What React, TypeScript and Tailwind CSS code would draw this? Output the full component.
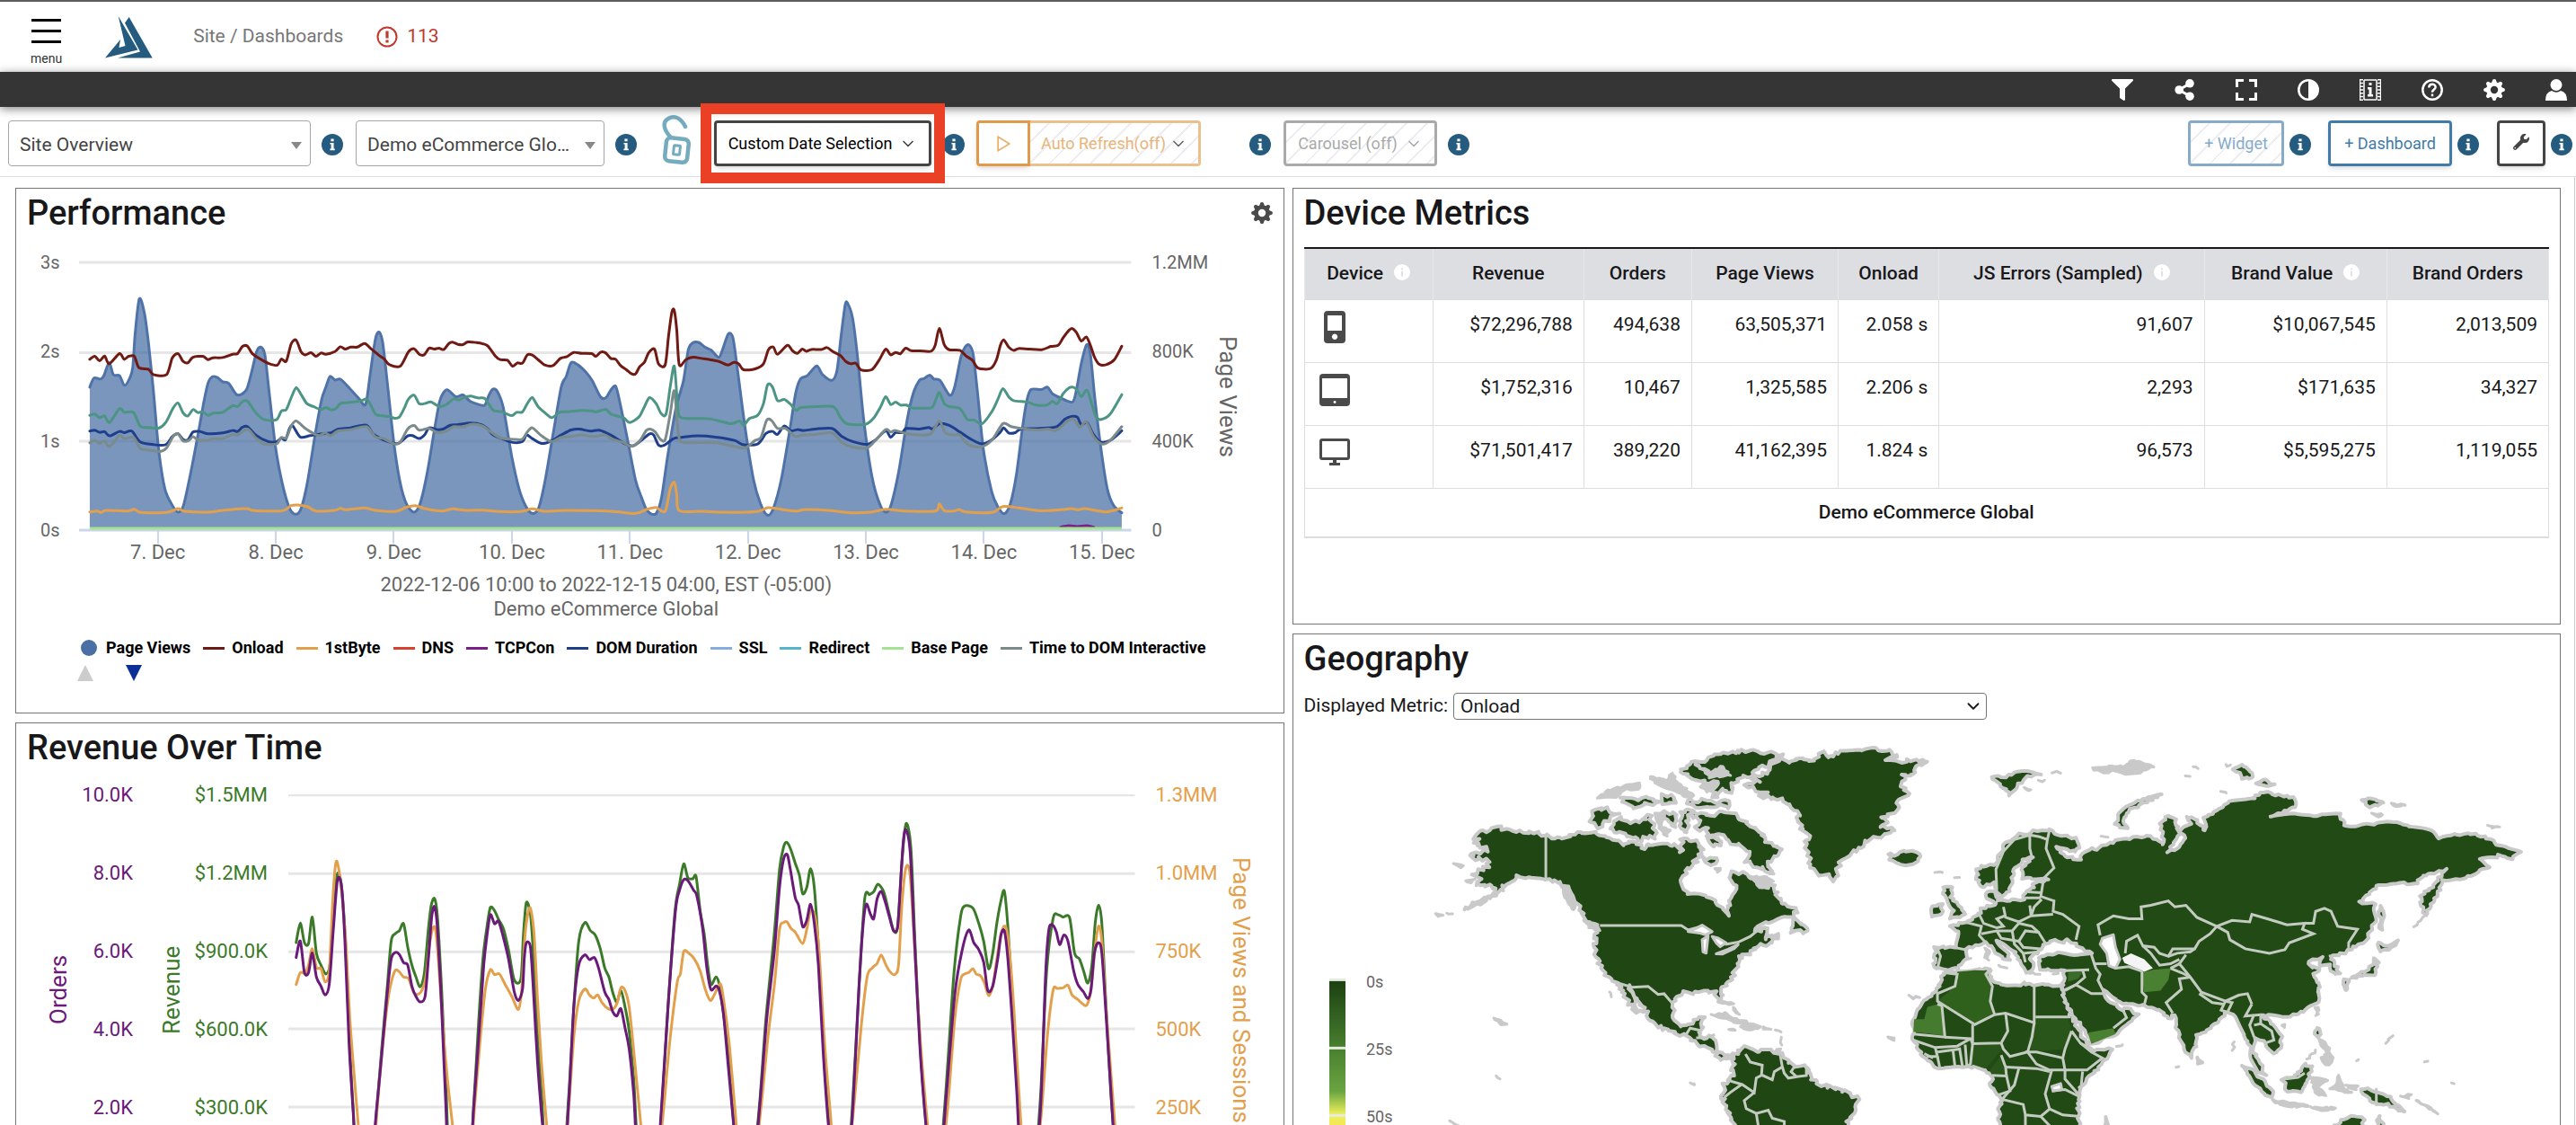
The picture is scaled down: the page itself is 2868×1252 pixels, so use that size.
import type { ReactNode } from 'react'
import { FaFilter, FaWrench } from 'react-icons/fa'
import { ChevronDown } from 'lucide-react'

const teeth = [0, 45, 90, 135, 180, 225, 270, 315]

function Gear({ className }: { className: string }) {
  return (
    <svg viewBox="0 0 24 24" className={className} fill="currentColor">
      {teeth.map((a) => (
        <path key={a} d="M8.500 5.500 L10.400 0.600 Q12 -0.400 13.600 0.600 L15.500 5.500 Z" transform={`rotate(${a} 12 12)`} />
      ))}
      <circle cx="12" cy="12" r="6.500" fill="none" stroke="currentColor" strokeWidth="4.600" />
    </svg>
  )
}

function Info({ className = '' }: { className?: string }) {
  return (
    <svg viewBox="0 0 24 24" className={`mt-0.5 size-6 shrink-0 ${className}`} role="img" aria-label="Info">
      <circle cx="12" cy="12" r="12" fill="#265b80" />
      <path d="M10.400 5.600h3.200v2.700h-3.200z M9.400 10h4.200v6.600h1.200v1.600H9.400v-1.600h1.200v-5H9.400z" fill="#fff" />
    </svg>
  )
}

function FadedInfo() {
  return (
    <svg viewBox="0 0 20 20" className="mb-1 ml-3 inline size-[18px]">
      <circle cx="10" cy="10" r="10" fill="#fff" />
      <path d="M9 5h2v2H9z M9 8.500h2v6.500H9z" fill="#dddee2" />
    </svg>
  )
}

function Logo() {
  return (
    <svg viewBox="0 0 53 47" className="h-[47px] w-[53px]" fill="#265b80">
      <path d="M26.700 1 L52.700 46.500 L14 46.500 L39 39.500 L22 7.500 Z" />
      <path d="M14.700 0 L36.500 37.500 L0 46.500 L17 26 L15.500 35 L22.500 33 Z" />
    </svg>
  )
}

function Lock() {
  return (
    <svg viewBox="0 0 36 58" className="h-[58px] w-9" fill="none" stroke="#74abbd" strokeLinecap="round">
      <path d="M11 25 C4 17 2 9 9 5 C17 0 24 6 28 14" strokeWidth="4.500" />
      <rect x="6" y="27" width="25" height="26" rx="5" strokeWidth="4.500" transform="rotate(6 18 40)" />
      <rect x="15" y="35" width="7" height="10" rx="1" strokeWidth="3" transform="rotate(6 18 40)" />
    </svg>
  )
}

const barIcons: { label: string; icon: ReactNode }[] = [
  { label: 'Filter', icon: <FaFilter className="size-6" /> },
  {
    label: 'Share',
    icon: (
      <svg viewBox="0 0 24 24" className="size-6" fill="currentColor">
        <path d="M18 5L6 12l12 7" fill="none" stroke="currentColor" strokeWidth="3" />
        <circle cx="6.200" cy="12" r="4.800" />
        <circle cx="18" cy="4.800" r="4.800" />
        <circle cx="18" cy="19.200" r="4.800" />
      </svg>
    ),
  },
  {
    label: 'Full screen',
    icon: (
      <svg viewBox="0 0 24 24" className="size-6" fill="none" stroke="currentColor" strokeWidth="3">
        <path d="M1.500 9V1.500H9 M15 1.500h7.500V9 M22.500 15v7.500H15 M9 22.500H1.500V15" />
      </svg>
    ),
  },
  {
    label: 'Contrast',
    icon: (
      <svg viewBox="0 0 24 24" className="size-6" fill="currentColor">
        <circle cx="12" cy="12" r="10.700" fill="none" stroke="currentColor" strokeWidth="2.600" />
        <path d="M12 1a11 11 0 0 1 0 22z" />
      </svg>
    ),
  },
  {
    label: 'Media info',
    icon: (
      <svg viewBox="0 0 24 24" className="size-6" fill="none" stroke="currentColor">
        <path d="M5 1v22 M19 1v22 M5 1h14 M5 23h14" strokeWidth="1.500" />
        <path d="M2.500 0v24 M21.500 0v24" strokeWidth="3" strokeDasharray="1.500 2.250" />
        <path d="M.6 0v24 M23.400 0v24" strokeWidth="1.200" />
        <path d="M10.500 4h3v3h-3z M9 9h4.500v8H15v2.500H9V17h1.500v-5.500H9z" fill="currentColor" stroke="none" />
      </svg>
    ),
  },
  {
    label: 'Help',
    icon: (
      <svg viewBox="0 0 24 24" className="size-6" fill="none" stroke="currentColor" strokeWidth="2.500">
        <circle cx="12" cy="12" r="10.700" />
        <path d="M8.300 9.500C8.300 4.500 15.800 4.800 15.600 9 C15.500 11.500 12 11.600 12 14.800 M12 16.500v2.800" />
      </svg>
    ),
  },
  { label: 'Settings', icon: <Gear className="size-6" /> },
  {
    label: 'Account',
    icon: (
      <svg viewBox="0 0 24 24" className="size-6" fill="currentColor">
        <circle cx="12" cy="6.500" r="6.500" />
        <path d="M0 24 Q0 14.500 7 13 Q12 16.500 17 13 Q24 14.500 24 24Z" />
      </svg>
    ),
  },
]

const legend = [
  { name: 'Onload', color: 'bg-[#701a14]' },
  { name: '1stByte', color: 'bg-[#e3a04c]' },
  { name: 'DNS', color: 'bg-[#d8402f]' },
  { name: 'TCPCon', color: 'bg-[#7b1f87]' },
  { name: 'DOM Duration', color: 'bg-[#1f3f8c]' },
  { name: 'SSL', color: 'bg-[#86addd]' },
  { name: 'Redirect', color: 'bg-[#58b3cc]' },
  { name: 'Base Page', color: 'bg-[#a3e392]' },
  { name: 'Time to DOM Interactive', color: 'bg-[#7b8a8a]' },
]

const days = ['7. Dec', '8. Dec', '9. Dec', '10. Dec', '11. Dec', '12. Dec', '13. Dec', '14. Dec', '15. Dec']

const pageViews =
  '218,690 228,660 244,663 252,652 265,608 275,648 290,652 302,684 314,662 322,625 328,510 338,395 350,440 360,540 372,700 385,900 400,1030 418,1085 432,1108 445,1085 462,980 480,850 495,735 505,675 515,655 527,658 540,672 555,678 575,716 597,700 610,640 622,572 632,556 642,580 652,700 668,890 684,1010 702,1095 717,1115 730,1095 745,1010 765,840 780,730 790,690 800,654 812,666 826,664 848,695 870,728 886,748 896,660 905,570 912,518 920,507 928,545 940,690 955,880 970,1010 985,1080 1003,1108 1018,1080 1035,980 1052,840 1065,740 1075,708 1085,699 1105,722 1122,716 1140,738 1160,748 1175,750 1184,720 1194,697 1206,706 1220,760 1240,920 1258,1030 1275,1090 1290,1112 1305,1095 1320,1010 1340,850 1360,690 1372,655 1384,608 1400,615 1420,640 1435,668 1455,722 1468,726 1480,700 1492,687 1502,740 1520,860 1540,1000 1555,1060 1565,1095 1576,1112 1590,1112 1603,1060 1618,920 1638,760 1656,670 1668,565 1680,541 1694,541 1708,556 1723,566 1742,590 1752,560 1765,512 1776,525 1786,620 1806,830 1826,1000 1843,1080 1860,1118 1874,1095 1893,1000 1913,840 1928,710 1940,662 1956,652 1979,619 1993,648 2016,667 2028,635 2038,520 2048,415 2054,410 2066,460 2078,590 2093,800 2113,990 2133,1085 2148,1108 2160,1080 2178,970 2198,800 2213,710 2228,667 2238,662 2253,650 2263,663 2278,668 2301,717 2313,690 2328,590 2338,557 2348,549 2358,580 2368,700 2383,900 2403,1040 2418,1090 2433,1113 2448,1080 2463,980 2478,820 2488,735 2498,698 2523,698 2538,690 2550,712 2568,725 2598,740 2608,700 2620,610 2633,548 2642,580 2653,730 2668,900 2683,1030 2698,1085 2718,1110'

const onload =
  '218,597 230,587 242,602 254,586 265,612 290,578 301,597 312,587 326,587 337,625 360,630 372,648 404,648 418,592 432,578 444,604 456,608 468,590 492,587 504,598 516,592 540,591 564,580 576,578 588,554 600,553 612,578 636,600 650,610 672,617 682,596 694,603 706,545 718,533 730,572 740,582 754,575 766,587 778,576 790,580 812,571 825,555 837,563 850,556 866,556 884,544 898,560 920,585 932,597 944,615 970,620 990,572 1004,562 1016,580 1028,582 1040,560 1052,563 1064,560 1076,564 1088,544 1098,540 1110,547 1122,548 1134,539 1155,541 1170,545 1182,552 1200,585 1212,598 1230,600 1242,620 1254,609 1266,610 1278,582 1290,583 1304,598 1320,616 1340,618 1358,594 1374,588 1390,574 1410,577 1434,578 1444,587 1456,573 1468,576 1480,594 1492,597 1504,618 1518,632 1530,645 1540,646 1550,622 1562,606 1572,575 1586,563 1596,613 1612,615 1620,520 1628,440 1634,434 1640,500 1646,615 1662,598 1680,590 1700,594 1720,598 1742,604 1764,616 1778,607 1790,612 1802,632 1830,629 1850,612 1862,565 1874,556 1884,580 1908,550 1920,568 1932,577 1944,563 1954,570 1966,564 1990,564 2004,558 2018,571 2036,584 2050,605 2062,612 2074,610 2086,632 2112,632 2130,600 2146,563 2158,582 2170,574 2182,578 2194,560 2208,568 2230,569 2256,570 2266,550 2276,494 2288,548 2300,565 2326,567 2340,585 2356,600 2370,626 2400,628 2414,600 2424,550 2432,532 2444,556 2456,567 2468,561 2494,563 2524,565 2546,554 2564,550 2576,525 2590,500 2598,494 2608,507 2620,536 2632,522 2642,550 2652,590 2664,614 2680,615 2700,598 2718,553'

const interactive =
  '218,784 230,780 242,792 254,786 266,808 290,762 302,774 324,775 340,820 360,825 385,827 402,808 420,760 432,743 444,776 456,786 468,765 480,775 492,773 504,784 518,777 540,774 564,752 576,755 588,738 600,737 620,775 640,798 670,799 682,770 694,765 706,725 718,692 730,715 744,745 760,755 778,765 790,758 802,766 814,762 826,744 840,742 872,737 888,730 898,748 910,780 926,786 945,788 956,794 968,790 980,760 990,730 1004,717 1016,745 1032,744 1044,739 1058,750 1068,755 1084,746 1100,729 1112,733 1122,726 1140,720 1158,726 1174,727 1184,745 1196,768 1215,772 1240,785 1252,774 1266,773 1278,745 1290,725 1304,755 1320,775 1336,792 1346,785 1358,773 1380,772 1410,768 1436,770 1444,773 1468,764 1480,780 1494,786 1512,793 1526,808 1548,790 1560,760 1574,725 1590,745 1602,778 1614,780 1624,690 1634,620 1642,750 1648,790 1680,795 1720,796 1770,812 1792,803 1802,818 1816,795 1836,784 1850,745 1860,682 1872,690 1884,735 1900,731 1914,745 1930,768 1940,758 1980,755 2020,756 2036,790 2052,812 2096,815 2116,795 2134,755 2146,722 2158,748 2170,740 2182,750 2196,750 2212,760 2230,760 2258,758 2268,730 2276,708 2288,745 2300,755 2326,762 2344,798 2360,800 2380,812 2404,770 2418,730 2430,695 2444,722 2456,735 2490,740 2510,750 2536,750 2550,738 2562,745 2576,712 2590,693 2600,690 2610,700 2620,722 2634,700 2646,750 2656,790 2668,798 2690,780 2718,715'

const domDuration =
  '218,837 230,834 242,841 254,839 266,853 290,838 302,842 320,837 340,873 372,882 402,882 418,855 432,846 444,865 456,866 468,840 484,838 504,846 540,843 564,835 576,838 588,824 600,822 620,850 650,872 670,873 682,860 692,866 702,828 710,820 728,857 752,852 780,846 802,843 820,830 850,826 888,817 906,848 940,872 965,878 988,853 1000,852 1016,862 1030,848 1040,826 1060,832 1074,830 1090,818 1110,815 1140,810 1168,816 1184,832 1196,850 1240,874 1266,872 1276,850 1290,862 1312,878 1336,870 1360,850 1384,833 1404,830 1430,837 1452,834 1480,850 1510,876 1534,886 1552,870 1574,846 1584,850 1596,884 1610,884 1632,862 1650,858 1690,853 1734,857 1780,868 1800,882 1836,880 1856,845 1872,838 1884,848 1900,820 1916,836 1932,832 1948,835 1976,830 2016,828 2040,855 2066,872 2100,881 2120,868 2146,836 2158,858 2170,842 2186,842 2196,828 2226,830 2250,825 2260,830 2276,812 2300,818 2326,840 2350,862 2380,880 2404,865 2424,840 2432,826 2444,843 2460,842 2474,830 2520,828 2560,822 2580,797 2596,788 2610,790 2620,815 2634,808 2648,845 2666,873 2690,868 2718,836'

const domInteractive =
  '218,876 230,868 242,878 254,870 266,888 290,852 302,862 324,858 340,895 360,900 388,905 404,893 420,855 432,846 444,870 458,868 468,856 480,866 500,868 518,862 540,862 564,848 576,850 600,830 620,860 640,880 670,880 682,858 694,860 706,820 718,803 740,828 760,845 774,852 788,843 802,852 820,836 850,832 888,822 910,856 930,862 956,880 970,874 988,830 1004,818 1016,834 1040,828 1060,842 1080,838 1100,822 1122,824 1142,814 1170,820 1190,840 1214,860 1250,865 1266,864 1278,840 1290,826 1310,850 1336,872 1360,858 1384,855 1410,850 1436,855 1466,850 1480,862 1510,875 1530,888 1550,870 1566,835 1576,830 1588,840 1600,864 1612,865 1624,780 1634,702 1642,820 1650,872 1690,875 1734,876 1780,888 1806,893 1830,868 1844,858 1858,800 1870,802 1884,828 1904,828 1926,854 1946,850 1976,848 2016,843 2040,875 2066,890 2100,893 2120,870 2146,832 2158,840 2170,835 2196,845 2230,850 2256,845 2276,803 2290,842 2310,850 2326,850 2344,880 2376,890 2404,866 2430,812 2450,822 2474,828 2510,833 2540,830 2560,834 2590,800 2602,797 2616,824 2632,806 2650,856 2670,880 2690,868 2718,822'

const firstByte =
  '218,1107 236,1104 246,1109 258,1102 310,1104 326,1098 342,1109 404,1109 432,1096 448,1105 504,1108 540,1102 596,1096 612,1102 640,1104 680,1104 694,1098 706,1086 722,1084 746,1090 766,1104 810,1102 826,1095 838,1100 884,1094 914,1103 960,1105 984,1092 1006,1086 1030,1096 1070,1104 1098,1097 1130,1102 1170,1101 1210,1106 1262,1106 1290,1097 1320,1105 1372,1102 1480,1105 1540,1112 1568,1098 1590,1092 1600,1102 1613,1102 1624,1030 1634,1008 1640,1050 1646,1103 1700,1105 1752,1108 1806,1108 1840,1104 1860,1093 1880,1095 1908,1102 1932,1104 1954,1099 2016,1103 2060,1110 2110,1108 2146,1098 2190,1104 2266,1104 2276,1080 2288,1103 2312,1104 2324,1099 2340,1107 2404,1109 2430,1089 2470,1094 2520,1103 2570,1100 2596,1096 2612,1100 2630,1096 2680,1107 2718,1094'

const revenue =
  '718,745 728,680 738,745 748,748 757,660 767,780 778,820 790,850 800,815 808,640 818,515 828,560 838,760 848,1100 856,1300 866,1500 900,1500 912,1320 925,1100 938,900 948,740 958,715 968,705 978,682 988,760 998,820 1008,860 1018,893 1028,850 1038,700 1045,620 1053,598 1060,660 1070,900 1080,1200 1092,1500 1135,1500 1148,1280 1160,1000 1170,800 1180,690 1188,628 1198,638 1208,668 1220,700 1232,770 1246,870 1262,865 1268,720 1275,612 1285,650 1292,780 1302,1050 1312,1250 1325,1500 1362,1500 1378,1250 1390,960 1402,740 1417,678 1430,705 1442,720 1454,765 1465,830 1475,860 1484,910 1494,945 1504,905 1514,960 1524,1040 1535,1200 1550,1500 1590,1500 1602,1320 1618,960 1635,640 1646,550 1656,482 1666,528 1678,532 1686,525 1696,640 1706,720 1714,820 1722,885 1734,860 1742,885 1752,980 1764,1120 1780,1400 1790,1500 1820,1500 1838,1310 1855,1000 1875,720 1888,500 1898,425 1905,410 1914,430 1926,480 1936,520 1944,582 1954,560 1963,498 1972,560 1982,760 1995,1100 2006,1320 2020,1500 2050,1500 2064,1300 2080,900 2094,600 2106,585 2116,575 2126,550 2140,575 2152,640 2164,705 2174,690 2184,480 2194,348 2206,430 2216,750 2228,1080 2242,1340 2256,1500 2274,1500 2290,1250 2310,850 2326,660 2336,623 2356,630 2370,680 2382,740 2394,832 2404,780 2414,680 2424,605 2432,573 2440,680 2450,900 2462,1200 2476,1500 2504,1500 2520,1250 2534,850 2550,665 2562,652 2574,660 2590,662 2602,780 2614,800 2624,840 2634,880 2644,820 2652,680 2660,620 2668,680 2678,950 2690,1250 2704,1500'

const orders =
  '718,795 728,740 738,845 748,845 757,780 767,860 778,890 788,920 798,885 808,700 818,536 828,560 836,740 846,1080 856,1310 866,1500 898,1500 912,1310 925,1120 938,920 948,800 958,778 968,785 978,812 988,820 998,890 1008,925 1018,943 1030,925 1038,800 1046,660 1053,625 1060,700 1070,960 1080,1280 1090,1500 1135,1500 1148,1290 1160,1060 1172,820 1180,720 1188,652 1198,682 1208,674 1220,730 1232,800 1246,910 1256,938 1266,900 1270,800 1275,746 1285,760 1292,900 1302,1140 1314,1350 1325,1500 1364,1500 1378,1270 1390,960 1402,820 1417,786 1428,802 1440,795 1450,830 1465,910 1475,935 1484,975 1494,990 1504,966 1514,1030 1524,1100 1535,1250 1548,1500 1588,1500 1602,1300 1618,960 1636,640 1646,570 1656,535 1666,538 1680,570 1688,590 1702,700 1712,830 1722,902 1734,890 1742,905 1752,980 1764,1160 1780,1400 1788,1500 1824,1500 1840,1290 1857,1000 1875,780 1888,560 1898,465 1907,452 1914,500 1926,595 1934,620 1944,692 1954,670 1963,617 1972,680 1982,820 1994,1120 2006,1350 2018,1500 2052,1500 2066,1280 2080,900 2090,690 2098,617 2108,650 2116,665 2124,600 2134,574 2144,610 2154,660 2164,705 2174,690 2182,520 2188,400 2194,368 2204,440 2214,720 2228,1100 2242,1350 2254,1500 2276,1500 2292,1250 2312,920 2330,770 2346,703 2358,745 2370,768 2382,810 2392,905 2404,890 2416,800 2424,720 2432,705 2440,790 2450,980 2462,1240 2474,1500 2504,1500 2520,1290 2532,850 2540,700 2550,688 2558,710 2566,752 2576,720 2586,740 2600,840 2610,885 2624,910 2634,932 2642,900 2650,780 2660,745 2668,780 2678,980 2690,1240 2702,1500'

const sessions =
  '718,885 728,845 740,848 748,820 757,765 767,828 778,832 788,876 798,840 806,620 812,500 817,475 826,550 838,740 848,1000 858,1180 870,1380 880,1500 902,1500 914,1300 928,1080 942,920 956,842 966,840 978,860 990,865 1004,915 1020,910 1032,860 1040,760 1048,700 1055,700 1062,800 1074,1040 1084,1200 1096,1350 1106,1500 1136,1500 1150,1290 1164,1060 1176,900 1188,836 1198,852 1210,850 1224,885 1240,925 1256,968 1264,900 1272,720 1280,640 1286,635 1294,720 1302,930 1312,1150 1324,1350 1334,1500 1364,1500 1378,1290 1390,1060 1402,940 1417,900 1428,920 1438,930 1448,920 1458,945 1472,965 1484,968 1494,950 1504,896 1514,905 1524,960 1536,1120 1552,1350 1562,1500 1590,1500 1606,1320 1622,1080 1640,880 1648,850 1656,775 1668,780 1682,800 1696,840 1708,900 1720,938 1730,920 1744,882 1752,930 1766,1080 1780,1300 1794,1500 1824,1500 1842,1310 1860,1060 1876,880 1888,700 1898,678 1906,676 1916,698 1926,710 1944,748 1954,700 1963,638 1974,660 1984,780 1996,1060 2010,1300 2024,1500 2050,1500 2068,1290 2086,1020 2100,860 2112,830 2124,815 2134,786 2144,815 2154,840 2166,852 2176,820 2184,620 2194,494 2204,520 2214,740 2228,1060 2246,1350 2258,1500 2276,1500 2294,1310 2312,1000 2326,870 2336,850 2346,845 2356,832 2364,850 2374,855 2384,880 2394,922 2404,890 2414,800 2424,715 2434,690 2442,740 2454,940 2468,1260 2482,1500 2506,1500 2522,1310 2536,1060 2550,905 2560,898 2574,896 2586,887 2596,920 2610,935 2622,950 2632,953 2642,900 2652,760 2660,690 2668,740 2678,960 2690,1180 2708,1500'

const parse = (s: string) => s.split(' ').map((p) => p.split(',').map(Number))

// cubic through every point, tangents taken from the neighbours
function smooth(s: string) {
  const p = parse(s)
  let d = `M${p[0][0]},${p[0][1]}`
  for (let i = 1; i < p.length; i++) {
    const a = p[Math.max(i - 2, 0)]
    const b = p[i - 1]
    const c = p[i]
    const e = p[Math.min(i + 1, p.length - 1)]
    d += `C${b[0] + (c[0] - a[0]) / 7},${b[1] + (c[1] - a[1]) / 7} ${c[0] - (e[0] - b[0]) / 7},${c[1] - (e[1] - b[1]) / 7} ${c[0]},${c[1]}`
  }
  return d
}

function Line({ points, color }: { points: string; color: string }) {
  return (
    <path
      d={smooth(points)}
      fill="none"
      stroke={color}
      strokeWidth="3"
      strokeLinejoin="round"
      strokeLinecap="round"
      vectorEffect="non-scaling-stroke"
    />
  )
}

function Scale({ labels, className }: { labels: string[]; className: string }) {
  return (
    <div className={`flex flex-col justify-between ${className}`}>
      {labels.map((l) => (
        <span key={l} className="flex h-0 items-center whitespace-nowrap">
          {l}
        </span>
      ))}
    </div>
  )
}

function Panel({ title, action, children }: { title: string; action?: ReactNode; children: ReactNode }) {
  return (
    <section className="border border-[#757575] bg-white px-3">
      <div className="flex h-[54px] items-center justify-between">
        <h2 className="text-[38px] font-medium text-[#18181a]">{title}</h2>
        {action}
      </div>
      {children}
    </section>
  )
}

function Performance() {
  return (
    <Panel
      title="Performance"
      action={
        <button aria-label="Widget settings" className="text-[#4a4a4a]">
          <Gear className="size-6" />
        </button>
      }
    >
      <div className="mt-7 flex h-[298px] text-xl text-[#666]">
        <Scale labels={['3s', '2s', '1s', '0s']} className="w-[58px] pl-[15px]" />
        <svg viewBox="192 273 2549 895" preserveAspectRatio="none" className="h-full min-w-0 flex-1 overflow-visible">
          {[273, 575, 871].map((y) => (
            <path key={y} d={`M192 ${y}H2741`} stroke="#e6e6e6" strokeWidth="3" vectorEffect="non-scaling-stroke" />
          ))}
          <path d={`${smooth(pageViews)}L2718,1168L218,1168Z`} fill="#4a6fa5" fillOpacity="0.73" />
          <Line points={pageViews} color="#4f73a8" />
          <path d="M192 1168H2741" stroke="#ccd6eb" strokeWidth="3" vectorEffect="non-scaling-stroke" />
          <Line points={onload} color="#701a14" />
          <Line points={firstByte} color="#e3a04c" />
          <Line points={domDuration} color="#1f3f8c" />
          <Line points={domInteractive} color="#7b8a8a" />
          <Line points={interactive} color="#4c9484" />
          <Line points="2570,1158 2590,1153 2610,1156 2634,1153 2650,1158" color="#7b1f87" />
          <path d="M218 1162H2718" stroke="#a3e392" strokeWidth="3" vectorEffect="non-scaling-stroke" />
        </svg>
        <Scale labels={['1.2MM', '800K', '400K', '0']} className="w-[91px] pl-[23px]" />
        <div className="mr-[34px] flex w-8 items-center text-[26px] leading-8 [writing-mode:vertical-rl]">
          <span className="flex-1 text-center">Page Views</span>
        </div>
      </div>
      <div className="mr-[124px] ml-20 grid grid-cols-9 text-center text-[22px] leading-5 text-[#666]">
        {days.map((d) => (
          <div key={d}>
            <div className="mx-auto h-[15px] w-[2px] bg-[#ccd6eb]" />
            {d}
          </div>
        ))}
      </div>
      <div className="mt-3 mr-[97px] text-center text-[22px] leading-[27px] text-[#666]">
        <p>2022-12-06 10:00 to 2022-12-15 04:00, EST (-05:00)</p>
        <p>Demo eCommerce Global</p>
      </div>
      <ul className="mt-[18px] ml-[60px] flex items-center gap-[14px] text-lg leading-6 font-bold whitespace-nowrap text-black">
        <li className="flex items-center gap-[10px]">
          <span className="size-[18px] rounded-full bg-[#4a6fa5]" />
          Page Views
        </li>
        {legend.map((l) => (
          <li key={l.name} className="flex items-center gap-2">
            <span className={`h-[3px] w-6 ${l.color}`} />
            {l.name}
          </li>
        ))}
      </ul>
      <div className="mt-[7px] mb-[35px] ml-14 flex gap-9">
        <button aria-label="Previous legend page">
          <svg viewBox="0 0 18 18" className="size-[18px]">
            <path d="M9 0L18 18H0z" fill="#ccc" />
          </svg>
        </button>
        <button aria-label="Next legend page">
          <svg viewBox="0 0 18 18" className="size-[18px]">
            <path d="M0 0H18L9 18z" fill="#0b2f96" />
          </svg>
        </button>
      </div>
    </Panel>
  )
}

function RevenueOverTime() {
  return (
    <Panel title="Revenue Over Time">
      <div className="mt-[25px] flex h-[435px] text-[22px]">
        <div className="flex w-[70px] rotate-180 items-center text-[26px] leading-8 text-[#6a1a78] [writing-mode:vertical-rl]">
          <span className="flex-1 text-center">Orders</span>
        </div>
        <Scale labels={['10.0K', '8.0K', '6.0K', '4.0K', '2.0K']} className="h-[348px] w-12 items-end text-[#6a1a78]" />
        <div className="flex w-[86px] rotate-180 items-center text-[26px] leading-8 text-[#3a7a28] [writing-mode:vertical-rl]">
          <span className="flex-1 text-center">Revenue</span>
        </div>
        <Scale
          labels={['$1.5MM', '$1.2MM', '$900.0K', '$600.0K', '$300.0K']}
          className="mr-[23px] h-[348px] w-16 items-end text-[#3a7a28]"
        />
        <svg viewBox="699 250 2049 1305" preserveAspectRatio="none" className="h-full min-w-0 flex-1">
          {[252, 515, 776, 1033, 1294].map((y) => (
            <path key={y} d={`M699 ${y}H2748`} stroke="#e6e6e6" strokeWidth="3" vectorEffect="non-scaling-stroke" />
          ))}
          <Line points={revenue} color="#3a7a28" />
          <Line points={sessions} color="#e3a04c" />
          <Line points={orders} color="#6a1a78" />
        </svg>
        <Scale labels={['1.3MM', '1.0MM', '750K', '500K', '250K']} className="h-[348px] w-[102px] pl-[23px] text-[#e3a04c]" />
        <div className="mr-[19px] flex w-8 items-center text-[26px] leading-8 text-[#e3a04c] [writing-mode:vertical-rl]">
          <span className="flex-1 text-center">Page Views and Sessions</span>
        </div>
      </div>
    </Panel>
  )
}

const columns = [
  { name: 'Device', width: 'w-[143px]', info: true },
  { name: 'Revenue', width: 'w-[168px]' },
  { name: 'Orders', width: 'w-[120px]' },
  { name: 'Page Views', width: 'w-[163px]' },
  { name: 'Onload', width: 'w-[112px]' },
  { name: 'JS Errors (Sampled)', width: 'w-[295px]', info: true },
  { name: 'Brand Value', width: 'w-[203px]', info: true },
  { name: 'Brand Orders', width: 'w-[180px]' },
]

const devices = [
  {
    name: 'Phone',
    icon: <path d="M9 0h16q4 0 4 4v28q0 4-4 4H9q-4 0-4-4V4q0-4 4-4z M9 5v17h16V5z M17 25.500a3.200 3.200 0 1 0 .1 0z" fillRule="evenodd" />,
    cells: ['$72,296,788', '494,638', '63,505,371', '2.058 s', '91,607', '$10,067,545', '2,013,509'],
  },
  {
    name: 'Tablet',
    icon: <path d="M4 0h26q4 0 4 4v28q0 4-4 4H4q-4 0-4-4V4q0-4 4-4z M3 5v22h28V5z M17 30a1.500 1.500 0 1 0 .1 0z" fillRule="evenodd" />,
    cells: ['$1,752,316', '10,467', '1,325,585', '2.206 s', '2,293', '$171,635', '34,327'],
  },
  {
    name: 'Desktop',
    icon: <path d="M3 2h28q3 0 3 3v18q0 3-3 3H19v3h4v3H11v-3h4v-3H3q-3 0-3-3V5q0-3 3-3z M3 5v18h28V5z" fillRule="evenodd" />,
    cells: ['$71,501,417', '389,220', '41,162,395', '1.824 s', '96,573', '$5,595,275', '1,119,055'],
  },
]

function DeviceMetrics() {
  return (
    <Panel title="Device Metrics">
      <table className="mt-[11px] mb-[95px] w-full table-fixed border-collapse text-[21px] text-[#18181a]">
        <thead>
          <tr className="h-[57px] border-t-2 border-[#18181a] bg-[#dddee2]">
            {columns.map((c) => (
              <th key={c.name} className={`border-x border-x-[#e8e8ea] text-center font-medium whitespace-nowrap ${c.width}`}>
                {c.name}
                {c.info && <FadedInfo />}
              </th>
            ))}
          </tr>
        </thead>
        <tbody>
          {devices.map((d) => (
            <tr key={d.name} className="h-[70px] border border-[#ddd] align-top">
              <td className="border border-[#ddd] pt-3 pl-4">
                <svg viewBox="0 0 34 36" className="h-9 w-[34px]" fill="#4a4a4a" role="img" aria-label={d.name}>
                  {d.icon}
                </svg>
              </td>
              {d.cells.map((v) => (
                <td key={v} className="border border-[#ddd] pt-3 pr-3 text-right leading-[30px]">
                  {v}
                </td>
              ))}
            </tr>
          ))}
        </tbody>
        <tfoot>
          <tr className="h-[55px] border border-b-2 border-[#ddd]">
            <td colSpan={8} className="text-center font-medium">
              Demo eCommerce Global
            </td>
          </tr>
        </tfoot>
      </table>
    </Panel>
  )
}

// land drawn on the western sheet
const westLand = [
  '465,685 480,678 470,682 492,655 512,650 535,640 552,650 570,650 595,658 620,656 655,668 690,677 700,670 720,668 728,660 745,655 752,665 770,660 800,665 812,678 830,680 840,692 860,690 880,690 893,710 905,692 940,695 975,695 988,715 990,675 1000,672 1010,685 1020,680 1030,698 1040,705 1040,720 1020,745 1030,752 1005,770 990,800 992,825 1005,845 1040,855 1078,870 1090,900 1102,920 1108,895 1105,870 1118,855 1122,820 1112,800 1118,780 1150,785 1160,798 1170,800 1172,820 1185,830 1200,825 1215,815 1225,845 1230,860 1245,880 1258,882 1275,895 1270,915 1235,925 1195,940 1170,965 1200,955 1205,970 1195,985 1225,975 1225,985 1205,1005 1175,1010 1165,1030 1130,1045 1135,1060 1122,1080 1115,1105 1088,1140 1085,1155 1095,1190 1088,1192 1072,1155 1050,1148 1020,1155 990,1155 970,1180 968,1215 972,1245 990,1262 1015,1255 1025,1235 1045,1235 1040,1260 1035,1280 1040,1295 1070,1290 1072,1325 1085,1345 1115,1345 1118,1360 1098,1355 1085,1365 1065,1335 1050,1325 1020,1305 1000,1285 975,1285 945,1270 920,1255 905,1225 880,1180 855,1135 868,1175 882,1215 870,1210 845,1160 832,1125 800,1105 780,1060 772,1020 775,960 750,935 735,890 710,850 690,815 650,802 610,797 580,792 550,820 530,845 490,875 445,898 480,870 520,850 530,835 512,822 500,825 490,818 475,820 485,800 470,790 490,770 505,765 505,745 485,738 470,740 460,725 480,722 505,712 490,700',
  '1118,1355 1130,1335 1150,1325 1165,1335 1200,1335 1230,1340 1245,1360 1270,1380 1300,1385 1315,1425 1330,1440 1370,1450 1405,1465 1430,1485 1425,1520 1400,1560 1400,1600 1130,1600 1110,1540 1090,1480 1095,1440 1115,1415',
  '770,585 800,583 830,600 810,615 800,625 780,640 762,628',
  '815,640 822,620 835,610 850,622 870,625 895,615 910,600 915,620 920,640 925,675 905,670 890,680 870,668 850,672 845,660 830,660',
  '1010,600 1040,595 1060,605 1080,595 1120,600 1135,620 1155,630 1190,660 1200,690 1218,695 1235,712 1215,735 1205,760 1215,790 1195,765 1180,770 1150,745 1155,720 1140,700 1115,690 1100,670 1075,665 1050,670 1055,640 1030,650 1025,640 1035,615',
  '985,460 1010,445 1050,430 1090,412 1150,403 1240,415 1220,435 1200,450 1180,455 1165,480 1145,485 1120,500 1110,530 1090,520 1070,550 1060,520 1040,520 1050,500 1010,490 1000,475',
  '1000,556 1030,560 1050,555 1070,562 1110,560 1105,578 1080,572 1050,578 1000,572',
  '840,545 870,555 900,550 930,565 900,570 870,578 845,566',
  '940,540 975,545 970,570 945,565',
  '945,595 980,600 970,625 975,640 955,628 945,615',
  '985,590 1015,590 1005,615 1000,660 985,650 990,625',
  '1058,672 1082,678 1088,690 1070,700',
  '1045,735 1062,740 1078,742 1070,756 1045,750',
  '1258,950 1275,925 1282,940 1300,950 1295,975 1280,965 1265,965',
  '1150,510 1180,495 1160,490 1195,475 1205,465 1215,450 1240,430 1265,440 1290,425 1310,435 1340,410 1360,425 1390,405 1430,397 1500,400 1530,420 1500,430 1530,440 1570,430 1604,438 1570,452 1570,480 1540,475 1550,490 1535,510 1555,540 1530,560 1525,600 1490,605 1500,625 1480,640 1515,640 1515,660 1490,665 1450,685 1440,700 1410,720 1385,745 1375,790 1365,805 1355,790 1330,795 1310,755 1300,710 1295,690 1310,670 1290,650 1280,620 1280,600 1265,580 1240,555 1185,545 1200,535 1170,525',
]

const westIslets = [
  '780,548 800,530 850,510 885,500 880,525 850,520 828,545 800,550',
  '908,485 930,488 950,495 965,470 975,500 1000,520 990,535 960,520 930,510',
  '985,520 1010,530 1020,545 990,545',
  '1020,440 1060,470 1090,450 1110,480 1060,485',
  '1040,505 1080,495 1075,520 1050,530',
  '925,600 945,590 940,640 960,650 950,670 930,640',
  '1065,1225 1095,1218 1125,1235 1155,1248 1120,1245 1090,1232',
  '1138,1258 1165,1250 1185,1258 1180,1268 1145,1268',
  '1105,1266 1125,1270 1110,1270',
  '1190,1264 1210,1270 1192,1270',
  '1100,1185 1118,1190 1110,1190',
  '1118,1200 1135,1220 1125,1215',
  '1225,1270 1235,1280',
  '1235,1290 1240,1320',
  '1220,1335 1235,1330 1232,1340',
  '520,1232 535,1238 550,1255 540,1255',
  '422,755 445,762 435,768',
  '372,912 392,912 380,918',
  '402,908 415,908',
  '450,805 475,800 462,812',
  '690,820 705,825 722,870 720,900 705,880',
  '750,935 780,942 782,960 760,950',
  '1008,1435 1022,1436 1018,1444',
  '527,1410 538,1424',
  '412,1555 430,1566',
  '812,1150 816,1165',
  '1160,795 1200,795 1215,810 1190,828',
  '1070,768 1085,765 1080,778',
  '1505,1292 1518,1300',
]

const westBorders = [
  '650,662 650,802',
  '785,946 988,946 1005,960 1040,948',
  '1098,1005 1130,998 1160,980 1185,955 1200,950',
  '832,1125 865,1138 905,1135 930,1160 945,1158 967,1190',
  '1000,1285 1010,1265 1035,1272',
  '1025,1295 1045,1295 1072,1285',
  '1148,1345 1160,1370 1190,1380 1188,1410 1215,1425 1220,1400 1240,1385 1235,1350',
  '1100,1425 1140,1440 1170,1465 1175,1420 1190,1410',
  '1095,1480 1110,1465 1138,1440',
  '1170,1465 1145,1490 1150,1515 1175,1530 1205,1520 1215,1545 1245,1555 1245,1568',
  '1175,1530 1180,1568',
  '1240,1385 1245,1405 1255,1420 1280,1415 1300,1412 1300,1385',
  '1272,1380 1262,1400 1275,1415',
]

const lakes = [
  '1005,965 1025,955 1040,945 1065,965 1048,975 1035,970',
  '1040,990 1055,978 1050,1032 1042,1028',
  '1065,980 1080,985 1100,1000 1085,1012 1075,1000',
  '1075,1034 1105,1020 1130,1005 1120,1018 1090,1035',
]

const eastLand = [
  '205,500 215,490 245,485 260,440 270,410 285,400 300,382 320,380 335,368 350,372 370,365 385,380 400,385 435,400 440,425 430,440 410,435 395,430 385,425 405,455 440,470 445,445 465,430 480,432 490,420 520,405 545,400 570,390 600,390 630,415 625,370 620,350 640,320 655,335 665,380 650,420 640,440 665,430 680,395 665,370 690,350 680,325 700,330 725,372 722,330 750,300 780,275 830,265 845,250 865,238 885,250 925,260 930,290 900,310 870,325 920,315 960,320 1000,318 1030,315 1040,350 1055,355 1090,350 1120,345 1160,340 1190,355 1235,370 1255,395 1280,385 1330,380 1365,395 1400,425 1440,440 1420,465 1390,450 1390,460 1350,465 1370,490 1330,520 1300,535 1265,535 1250,590 1225,655 1215,620 1215,590 1245,550 1270,500 1240,515 1220,520 1200,550 1165,545 1120,550 1100,575 1075,610 1110,615 1110,670 1090,740 1060,760 1040,780 1010,790 1020,820 1030,850 1018,852 1005,820 985,820 990,795 960,805 965,825 985,830 972,850 985,890 980,940 950,975 900,995 870,985 855,990 880,1020 897,1060 895,1095 880,1115 868,1095 855,1070 835,1060 835,1110 850,1150 860,1190 845,1180 830,1130 825,1090 810,1050 795,1000 775,975 755,1005 735,1030 705,1055 702,1090 690,1130 670,1080 655,1010 655,985 640,1000 620,970 585,955 550,950 530,945 515,930 495,905 500,930 520,955 535,970 545,960 570,985 545,1020 520,1050 465,1085 455,1050 430,1000 410,960 398,920 400,880 405,840 375,835 350,835 345,810 350,790 390,780 440,785 465,780 440,760 410,735 400,745 380,735 355,750 345,780 325,790 335,830 320,845 305,815 290,775 260,745 250,740 275,780 280,800 265,800 240,765 225,745 205,755 180,765 185,790 160,830 130,835 108,825 110,760 160,760 160,710 145,690 180,675 210,650 215,630 250,615 235,600 225,590 230,575 245,575 255,605 310,600 315,570 335,560 330,545 350,540 370,535 340,530 310,530 305,500 330,460 310,465 290,500 285,530 280,570 262,590 250,570 245,545 215,560 205,530',
  '130,845 160,840 200,835 235,832 232,850 240,870 270,885 295,890 310,880 330,885 360,885 395,890 400,915 410,960 430,1020 455,1085 465,1105 510,1098 500,1130 470,1180 440,1225 435,1300 440,1400 255,1400 255,1300 262,1270 235,1220 240,1190 225,1170 200,1160 160,1160 120,1168 85,1130 60,1070 60,1000 85,940 115,900',
  '5,445 15,452 30,440 60,438 78,458 65,478 40,488 20,478 8,465',
  '128,560 150,560 145,590 165,620 178,650 160,662 140,662 155,640 140,610 130,590',
  '100,655 105,620 125,618 125,648',
  '518,350 530,310 560,275 625,248 590,275 555,300 540,335 545,365',
  '240,190 270,190 300,170 350,180 320,190 300,215 280,250 265,225 250,210',
  '785,165 805,150 825,165 832,195 808,195 800,178',
  '840,210 855,198 885,218 845,220',
  '1080,265 1110,265 1130,275 1115,285 1095,290',
  '1120,620 1128,650 1128,700 1122,700',
  '1118,745 1140,755 1165,738 1140,770 1120,772',
  '1108,795 1116,810 1110,850 1080,858 1060,858 1088,838 1105,820',
  '1040,868 1052,875 1042,905',
  '703,1128 715,1142 708,1152',
  '976,1028 985,1040 982,1058 975,1050',
  '805,1155 825,1165 845,1190 875,1235 878,1260 862,1255 840,1220 825,1190',
  '900,1200 930,1190 950,1150 968,1160 955,1210 940,1245 910,1240',
  '1075,1235 1090,1228 1140,1255 1155,1280 1178,1310 1160,1300 1140,1285 1115,1285 1100,1270',
  '875,1272 920,1280 960,1290 910,1290',
  '1010,1370 1040,1332 1055,1325 1085,1332 1075,1400',
  '1118,1320 1130,1360 1140,1400 1112,1400',
  '488,1380 500,1325 506,1360',
]

const eastIslets = [
  '465,162 500,155 540,155 560,135 605,155 575,175 540,182 510,172 495,178',
  '375,175 392,176',
  '345,205 360,204',
  '312,225 328,232 320,238',
  '695,158 708,160',
  '678,190 688,190',
  '768,152 782,154',
  '762,240 774,242',
  '1148,280 1180,285 1160,288',
  '1105,312 1130,318 1115,322',
  '1365,355 1392,355 1378,362',
  '112,508 126,510',
  '155,530 162,525',
  '490,392 500,392',
  '50,922 62,928 75,925 62,932',
  '225,765 232,770 230,805 225,800',
  '252,818 270,826',
  '325,845 345,850',
  '380,850 392,848',
  '180,800 190,800',
  '975,965 982,960 978,990',
  '900,1018 908,1015 904,1028',
  '985,1065 1000,1080 1010,1120 1015,1140 1000,1155 990,1130 1000,1110 985,1090',
  '955,1135 975,1105',
  '965,1195 1000,1205 980,1225 995,1255 975,1250',
  '1010,1235 1030,1190 1035,1230 1060,1245',
  '1040,1218 1070,1220 1065,1238',
  '960,1295 1020,1296 1000,1306',
  '1165,1260 1190,1250 1185,1268',
  '1205,1270 1255,1315 1235,1300',
  '1135,1080 1148,1055',
  '1045,870 1080,855',
  '655,1158 665,1160',
  '525,1088 538,1088',
  '788,1078 788,1105',
  '1200,692 1222,655',
  '1225,1140 1230,1142',
  '5,1062 14,1066',
  '1070,1135 1070,1142',
  '1285,1210 1288,1218',
]

const tinted = [
  { d: '160,842 200,837 228,838 235,875 240,990 200,1018 115,940 155,890', fill: '#2f601c' },
  { d: '115,950 128,955 132,1055 60,1042 62,1000 85,1000 92,960', fill: '#457b2e' },
  { d: '580,845 605,835 645,830 640,870 622,905 585,910', fill: '#4a8032' },
  { d: '457,1045 515,1030 520,1050 465,1083', fill: '#4a8032' },
  { d: '412,845 445,842 435,865 412,875', fill: '#3a6d27' },
  { d: '338,998 412,998 420,1040 400,1100 330,1110 322,1070', fill: '#29551a' },
  { d: '195,1085 260,1080 262,1100 225,1165 192,1150', fill: '#29551a' },
  { d: '235,1170 260,1120 272,1190 238,1186', fill: '#29551a' },
  { d: '535,795 555,780 585,800 605,830 585,842 540,812', fill: '#f4f4f4' },
]

const eastBorders = [
  '250,570 248,500 265,440 290,400 325,385 325,430 330,460',
  '325,385 345,390 365,400 362,430 380,495 355,532',
  '365,400 370,368',
  '355,545 350,590 380,605 378,640 400,650 437,690 430,735',
  '315,595 350,595',
  '320,575 350,578',
  '328,655 335,625 352,600',
  '328,655 378,650',
  '265,625 270,660 300,675 328,655 325,620',
  '210,650 220,680 250,695 265,690 250,665 268,655',
  '175,675 215,690 210,720 225,745',
  '215,715 250,705 285,705 300,680',
  '250,705 260,730 300,740 315,705 345,710 360,745',
  '300,740 310,760 350,765',
  '285,705 290,750 310,780 345,775',
  '300,680 330,690 345,710',
  '310,780 315,810',
  '115,765 122,790 115,830',
  '158,762 185,770',
  '485,720 480,685 515,655 550,665 580,665 578,625 600,620 640,605 655,625 680,620 705,660 750,690',
  '750,690 785,670 825,675 830,650 865,665 910,685 950,680 945,700 970,715 915,745 905,768 870,780 815,765 780,735 775,710 750,690',
  '950,680 970,680 975,640 995,630 1010,640 1025,690 1070,700 1050,745 1050,770',
  '750,690 735,715 710,740 700,765 650,765 640,790 620,780 608,760 582,755 570,720 545,740 542,780',
  '640,790 660,780 690,775 700,765',
  '582,755 600,780 620,820 645,815 665,800',
  '680,785 665,815 690,860 715,910 770,940 800,920 820,915 830,950',
  '710,915 740,945 765,950',
  '690,860 665,865 670,900 635,945 650,980',
  '580,840 580,910 590,925 585,955',
  '465,785 475,830 485,850 480,870 495,915',
  '470,815 500,815',
  '520,830 550,825 580,840',
  '645,830 665,815',
  '645,830 670,845 690,860',
  '400,905 430,885 465,915 495,915',
  '445,835 450,860 430,885 405,905',
  '405,838 460,835',
  '537,970 545,995 515,1030',
  '770,940 785,945 775,975',
  '770,940 760,970 780,980',
  '830,950 815,990 850,985 858,985',
  '835,985 825,1020 835,1060',
  '850,990 850,1015 875,1040 880,1070 860,1080',
  '835,1020 850,1015',
  '905,1200 935,1195 950,1180',
  '1113,1230 1113,1290',
  '1005,790 1040,780',
  '130,845 160,850 155,890 115,915 115,940 200,1018 245,985 270,980 335,1012 335,885',
  '235,832 225,850 240,890 235,940 245,985',
  '338,993 418,993',
  '270,980 275,1040 260,1080 195,1082 195,1018',
  '335,1012 330,1060 320,1110 280,1125 265,1100 260,1080',
  '115,950 125,955 132,1060 60,1050',
  '132,1060 190,1065 195,1082 190,1150 180,1160',
  '60,1070 110,1095 160,1090 190,1065',
  '110,1095 115,1125 90,1125',
  '115,1125 120,1160',
  '150,1100 155,1160',
  '165,1095 172,1160',
  '178,1085 182,1160',
  '115,1110 165,1100',
  '85,1115 105,1130',
  '420,1040 405,1100 400,1130 340,1110 320,1110 340,1150 370,1170 405,1170 400,1130',
  '420,1040 440,1080 465,1110 490,1130 455,1170 405,1170 405,1200 435,1250',
  '440,1080 458,1095',
  '270,1160 340,1165 370,1175',
  '260,1120 270,1160 272,1190 238,1188',
  '272,1190 280,1240 250,1255',
  '300,1165 290,1220 262,1268 310,1285 315,1320 350,1325 370,1300 360,1250 375,1170',
  '375,1240 405,1235 440,1260',
  '370,1300 400,1320 440,1325',
  '315,1320 315,1356',
  '350,1325 370,1356',
  '445,1175 442,1220',
]

const seas = ['490,730 515,718 520,760 530,800 520,830 505,822 500,780 485,750', '375,1225 395,1215 398,1235 378,1240']

// splits each edge into short steps and nudges them, so coasts look ragged
function ragged(s: string, amount: number) {
  const p = parse(s)
  const out: string[] = []
  p.forEach((a, i) => {
    const b = p[(i + 1) % p.length]
    const steps = Math.max(1, Math.round(Math.hypot(b[0] - a[0], b[1] - a[1]) / 8))
    for (let k = 0; k < steps; k++) {
      const x = a[0] + ((b[0] - a[0]) * k) / steps
      const y = a[1] + ((b[1] - a[1]) * k) / steps
      out.push(`${x + amount * Math.sin(x * 7.3 + y * 3.1)},${y + amount * Math.sin(x * 2.7 + y * 9.7)}`)
    }
  })
  return out.join(' ')
}

function Shapes({ list, fill, width, rough = 0 }: { list: string[]; fill: string; width: number; rough?: number }) {
  return (
    <>
      {list.map((p) => (
        <polygon
          key={p}
          points={rough ? ragged(p, rough) : p}
          fill={fill}
          stroke="#c9c9c9"
          strokeWidth={width}
          strokeLinejoin="round"
          vectorEffect="non-scaling-stroke"
        />
      ))}
    </>
  )
}

function Borders({ list }: { list: string[] }) {
  return (
    <>
      {list.map((p) => (
        <polyline key={p} points={p} fill="none" stroke="#c4cbc1" strokeWidth="3" vectorEffect="non-scaling-stroke" />
      ))}
    </>
  )
}

function WorldMap() {
  return (
    <svg viewBox="1439 808 1411 462" className="block w-full" role="img" aria-label="Onload time by country">
      <g transform="translate(1430 690) scale(0.4464 0.3584)">
        <Shapes list={westLand} fill="#1f4613" width={4} rough={5} />
        <Shapes list={westIslets} fill="#c9c9c9" width={3} rough={3} />
        <Borders list={westBorders} />
        <Shapes list={lakes} fill="#fff" width={3} />
      </g>
      <g transform="translate(2100 800) scale(0.4898 0.3333)">
        <Shapes list={eastLand} fill="#214a15" width={4} rough={3} />
        {tinted.map((t) => (
          <polygon key={t.d} points={t.d} fill={t.fill} />
        ))}
        <Shapes list={eastIslets} fill="#c9c9c9" width={3} rough={3} />
        <Borders list={eastBorders} />
        <Shapes list={seas} fill="#fff" width={3} />
      </g>
      <defs>
        <linearGradient id="seconds" x1="0" y1="0" x2="0" y2="1">
          <stop offset="0" stopColor="#1d4011" />
          <stop offset="0.400" stopColor="#467d2e" />
          <stop offset="0.680" stopColor="#6aa541" />
          <stop offset="0.820" stopColor="#eef05a" />
          <stop offset="1" stopColor="#f5d94a" />
        </linearGradient>
      </defs>
      <rect x="1479" y="1090" width="18" height="182" fill="url(#seconds)" />
      {[1090, 1166, 1241].map((y) => (
        <rect key={y} x="1479" y={y - 2} width="18" height="3" fill="#e6ebe0" />
      ))}
      <g fontSize="18" fill="#666">
        <text x="1520" y="1098">0s</text>
        <text x="1520" y="1173">25s</text>
        <text x="1520" y="1248">50s</text>
      </g>
    </svg>
  )
}

function Geography() {
  return (
    <Panel title="Geography">
      <div className="mt-[11px] flex h-[30px] items-center gap-[6px] text-[21px] text-[#18181a]">
        <label htmlFor="metric">Displayed Metric:</label>
        <div className="relative">
          <select
            id="metric"
            className="block h-[30px] w-[594px] appearance-none rounded-[4px] border border-[#757575] bg-white px-[7px] leading-7"
          >
            <option>Onload</option>
          </select>
          <ChevronDown className="pointer-events-none absolute top-1 right-1 size-[22px]" />
        </div>
      </div>
      <div className="-mx-3 mt-2">
        <WorldMap />
      </div>
    </Panel>
  )
}

function Picker({ label, value, className }: { label: string; value: string; className: string }) {
  return (
    <div className={`relative shrink-0 ${className}`}>
      <select
        aria-label={label}
        className="block h-[51px] w-full appearance-none truncate rounded-[4px] border border-[#a5a5a5] bg-white pt-1 pr-9 pl-3 text-[21px] text-[#444]"
      >
        <option>{value}</option>
      </select>
      <svg viewBox="0 0 12 8" className="pointer-events-none absolute top-6 right-[10px] h-2 w-3">
        <path d="M0 0h12L6 8z" fill="#888" />
      </svg>
    </div>
  )
}

const button = 'flex h-[51px] shrink-0 items-center justify-center rounded-[4px] border-[3px] text-lg whitespace-nowrap'
const hatch = 'bg-[repeating-linear-gradient(135deg,#fff_0px,#fff_14px,#eeeef2_14px,#eeeef2_16px)]'

function Toolbar() {
  return (
    <div className="flex h-[78px] items-center border-b border-[#ddd] pt-[6px] pr-1 pb-[2px] pl-[9px]">
      <Picker label="Dashboard" value="Site Overview" className="mr-3 w-[337px]" />
      <Info className="mr-[14px]" />
      <Picker label="Site" value="Demo eCommerce Glo…" className="mr-3 w-[277px]" />
      <Info className="mr-[26px]" />
      <button aria-label="Unlock layout" className="-mt-2 mr-6 shrink-0">
        <Lock />
      </button>
      <div className="relative mr-[13px] shrink-0">
        <button className={`w-[242px] gap-2 border-[#444] bg-white text-black shadow-md ${button}`}>
          Custom Date Selection
          <ChevronDown className="size-5 text-[#444]" />
        </button>
        <div className="pointer-events-none absolute -inset-x-[15px] -inset-y-[19px] z-10 border-[12px] border-[#ea4025]" />
      </div>
      <Info className="mr-[13px]" />
      <div className="mr-[54px] flex">
        <button aria-label="Play" className={`w-[60px] rounded-r-none border-[#e09a48] bg-white shadow-md ${button}`}>
          <svg viewBox="0 0 16 20" className="h-[18px] w-[15px]" fill="none" stroke="#e8b070" strokeWidth="2">
            <path d="M1 1.500L15 10L1 18.500Z" />
          </svg>
        </button>
        <button
          disabled
          className={`w-[190px] gap-1 rounded-l-none border-l-0 border-[#ecc08c] text-[#e8b479] ${hatch} ${button}`}
        >
          Auto Refresh(off)
          <ChevronDown className="size-5 text-[#666]" />
        </button>
      </div>
      <Info className="mr-[14px]" />
      <button disabled className={`mr-3 w-[171px] gap-2 border-[#aaa] text-[#aaa] ${hatch} ${button}`}>
        Carousel (off)
        <ChevronDown className="size-5" />
      </button>
      <Info />
      <button disabled className={`mr-[6px] ml-auto w-[107px] border-[#86abc8] text-[#86abc8] ${hatch} ${button}`}>
        + Widget
      </button>
      <Info className="mr-[19px]" />
      <button className={`mr-[6px] w-[138px] border-[#437ba8] bg-white text-[#437ba8] shadow-md ${button}`}>+ Dashboard</button>
      <Info className="mr-5" />
      <button aria-label="Tools" className={`mr-[6px] w-[54px] border-[#444] bg-white text-[#444] shadow-md ${button}`}>
        <FaWrench className="mb-1 size-[18px]" />
      </button>
      <Info />
    </div>
  )
}

export default function App() {
  return (
    <div className="flex h-screen flex-col overflow-hidden bg-white font-[Roboto,'Liberation_Sans',sans-serif]">
      <header className="shrink-0">
        <div className="flex h-20 items-center border-t-2 border-[#5c5c5c]">
          <button className="ml-[34px] flex flex-col items-center pt-3 text-sm leading-4 text-[#333]">
            <span className="mb-[9px] flex flex-col gap-[9px]">
              <span className="h-[3px] w-[33px] bg-black" />
              <span className="h-[3px] w-[33px] bg-black" />
              <span className="h-[3px] w-[33px] bg-black" />
            </span>
            menu
          </button>
          <a href="#" aria-label="Home" className="ml-12">
            <Logo />
          </a>
          <nav className="ml-[45px] text-[21px] text-[#777]">Site / Dashboards</nav>
          <a href="#" className="ml-[37px] flex items-center gap-[10px] text-[21px] text-[#c0392f]">
            <svg viewBox="0 0 24 24" className="size-6" fill="none" stroke="currentColor">
              <circle cx="12" cy="12" r="10.500" strokeWidth="2" />
              <path d="M12 5.500v8 M12 15.500v3" strokeWidth="3.200" />
            </svg>
            113
          </a>
        </div>
        <div className="relative flex h-[39px] items-center justify-end gap-[45px] bg-[#353535] pr-[10px] text-white shadow-[0_2px_10px_rgba(0,0,0,0.5)]">
          {barIcons.map((b) => (
            <button key={b.label} aria-label={b.label}>
              {b.icon}
            </button>
          ))}
        </div>
        <Toolbar />
      </header>
      <main className="mr-px grid min-h-0 flex-1 grid-cols-2 items-start gap-x-[9px] overflow-hidden border-r border-[#ccc] pt-3 pr-[15px] pl-[17px]">
        <div className="flex flex-col gap-[10px]">
          <Performance />
          <RevenueOverTime />
        </div>
        <div className="flex flex-col gap-[10px]">
          <DeviceMetrics />
          <Geography />
        </div>
      </main>
    </div>
  )
}
